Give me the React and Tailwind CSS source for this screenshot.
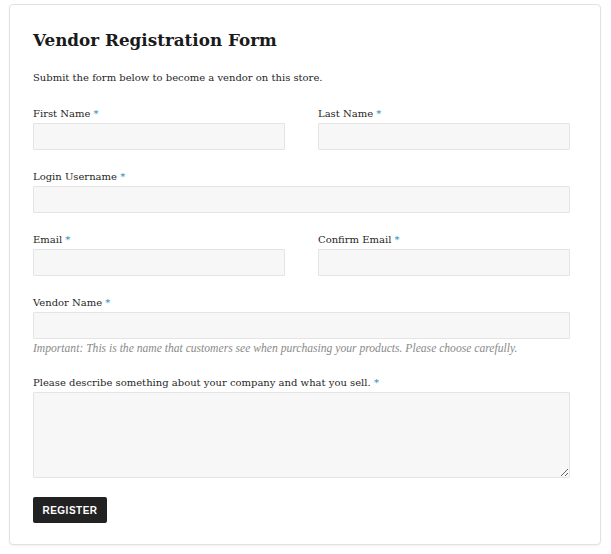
import React from 'react';

const serif = { fontFamily: '"DejaVu Serif", "Liberation Serif", serif' };

const Label = ({ children }) => (
  <label className="block text-[10px] text-[#1f1f1f] leading-none mb-[4px]">
    {children} <span className="text-[#1e88b4]">*</span>
  </label>
);

const Input = () => (
  <input
    type="text"
    className="block w-full h-[27px] bg-[#f7f7f7] border border-[#e4e4e4] rounded-[1px] outline-none"
  />
);

const Field = ({ label, className = '' }) => (
  <div className={className}>
    <Label>{label}</Label>
    <Input />
  </div>
);

const App = () => {
  return (
    <div className="w-[611px] h-[554px] bg-white pt-[4px] pl-[9px]" style={serif}>
      <div className="w-[592px] h-[541px] bg-white border border-[#e2e2e2] rounded-[4px] shadow-[0_1px_2px_rgba(0,0,0,0.06)] pt-[27px] pl-[23px]">
        <div className="w-[537px]">
          {/* Header */}
          <h1 className="font-bold text-[16.8px] leading-none text-[#1a1a1a]">
            Vendor Registration Form
          </h1>
          <p className="mt-[24px] text-[10px] leading-none text-[#1f1f1f]">
            Submit the form below to become a vendor on this store.
          </p>

          {/* Form */}
          <form className="mt-[26px]">
            <div className="grid grid-cols-2 gap-x-[33px]">
              <Field label="First Name" />
              <Field label="Last Name" />
            </div>
            <Field label="Login Username" className="mt-[22px]" />
            <div className="grid grid-cols-2 gap-x-[33px] mt-[22px]">
              <Field label="Email" />
              <Field label="Confirm Email" />
            </div>
            <Field label="Vendor Name" className="mt-[22px]" />
            <p
              className="mt-[4px] text-[11.6px] italic leading-none text-[#8a8a8a]"
              style={{ fontFamily: '"Liberation Serif", serif' }}
            >
              Important: This is the name that customers see when purchasing your products. Please choose carefully.
            </p>
            <div className="mt-[24px]">
              <Label>Please describe something about your company and what you sell.</Label>
              <textarea className="block w-full h-[86px] bg-[#f7f7f7] border border-[#e4e4e4] rounded-[1px] outline-none resize-y" />
            </div>
            <button
              type="button"
              className="mt-[19px] w-[74px] h-[26px] bg-[#222] text-white text-[10px] font-bold tracking-[0.5px] rounded-[2px]"
              style={{ fontFamily: '"Liberation Sans", Arial, sans-serif' }}
            >
              REGISTER
            </button>
          </form>
        </div>
      </div>
    </div>
  );
};

export default App;
